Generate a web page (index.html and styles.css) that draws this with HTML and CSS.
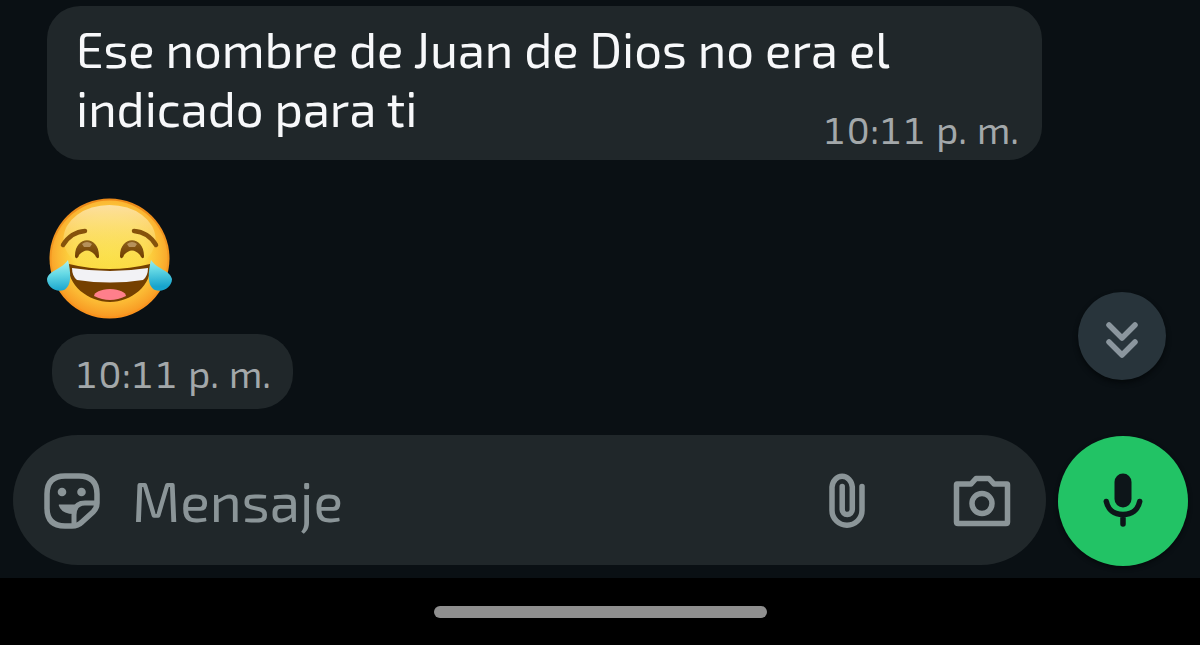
FILE: index.html
```html
<!DOCTYPE html>
<html lang="es">
<head>
<meta charset="utf-8">
<title>Chat</title>
<link rel="stylesheet" href="styles.css">
</head>
<body>
<div class="screen">
  <main class="chat">
    <section class="bubble">
      <p class="message">Ese nombre de Juan de Dios no era el<br>indicado para ti</p>
      <time class="time">10:11 p. m.</time>
    </section>
    <div class="reaction-row">
      <div class="reaction">
        <svg class="emoji" viewBox="0 0 126 122" role="img" aria-label="Cara llorando de risa">
          <defs>
            <linearGradient id="rim" x1="0" y1="0" x2="0" y2="1"><stop offset="0" stop-color="#ed8a18"/><stop offset=".5" stop-color="#f49a22"/><stop offset="1" stop-color="#fb921c"/></linearGradient>
            <radialGradient id="skin" cx=".5" cy=".45" r=".56"><stop offset="0" stop-color="#fbe044"/><stop offset=".55" stop-color="#fcd942"/><stop offset=".8" stop-color="#fbb733"/><stop offset="1" stop-color="#f89722"/></radialGradient>
            <linearGradient id="shine" x1="0" y1="0" x2="0" y2="1"><stop offset="0" stop-color="#fde0a0"/><stop offset="1" stop-color="#fbe258" stop-opacity="0"/></linearGradient>
            <linearGradient id="eye" x1="0" y1="0" x2="0" y2="1"><stop offset="0" stop-color="#8c601b"/><stop offset="1" stop-color="#713d00"/></linearGradient>
            <linearGradient id="tear" x1="0" y1="0" x2=".2" y2="1"><stop offset="0" stop-color="#b3f4ef"/><stop offset=".45" stop-color="#67dae5"/><stop offset="1" stop-color="#17a4cd"/></linearGradient>
          </defs>
          <circle cx="62.500" cy="61.500" r="60" fill="url(#rim)"/>
          <circle cx="62.500" cy="61.500" r="58" fill="url(#skin)"/>
          <ellipse cx="62.500" cy="42" rx="46" ry="34" fill="url(#shine)"/>
          <path d="M16 48Q24 35 38 34M109 48Q101 35 87 34" fill="none" stroke="#86520b" stroke-width="4.500" stroke-linecap="round"/>
          <path d="M28 59C28 38 52 38 52 59C52 63 49 61 48 58Q40 49 32 58C31 62 28 62 28 59ZM73 59C73 38 97 38 97 59C97 63 94 61 93 58Q85 49 77 58C76 62 73 62 73 59Z" fill="url(#eye)"/>
          <path d="M35 47Q40 43 45 47L43 50H37ZM80 47Q85 43 90 47L88 50H82Z" fill="#b6915b"/>
          <path d="M22 67Q62.500 77 103 67C106 88 84 105 63 105S19 88 22 67Z" fill="#754000"/>
          <path d="M25 71Q63 77 101 71Q101 79 96 83Q63 88 30 83Q25 79 25 71Z" fill="#f2f2f5"/>
          <path d="M47 99Q48 93 63 92Q78 93 79 99Q63 107 47 99Z" fill="#ff7f8b"/>
          <path d="M21 63C24 76 25 89 17 93C9 96 0 90 0 82C2 73 14 73 21 63ZM104 63C101 76 100 89 108 93C116 96 125 90 125 82C123 73 111 73 104 63Z" fill="url(#tear)"/>
        </svg>
        <div class="time-pill"><time class="time">10:11 p. m.</time></div>
      </div>
      <button class="scroll-down" aria-label="Ir al final">
        <svg width="34" height="38" viewBox="0 0 34 38" fill="none" stroke="#8b969e" stroke-width="5.500" stroke-linecap="round" stroke-linejoin="round"><path d="M4 4 17 17 30 4M4 21 17 34 30 21"/></svg>
      </button>
    </div>
    <div class="composer">
      <div class="field">
        <svg class="sticker" width="58" height="58" viewBox="0 0 58 58">
          <path d="M22 4H36Q54 4 54 22V31Q54 36 50 40L39 50Q35 54 29 54H22Q4 54 4 36V22Q4 4 22 4Z" fill="none" stroke="#8b9598" stroke-width="5.500"/>
          <path d="M31 53V43Q31 31 42 31H54" fill="none" stroke="#8b9598" stroke-width="5"/>
          <circle cx="19" cy="20" r="4.300" fill="#8b9598"/><circle cx="38.500" cy="20" r="4.300" fill="#8b9598"/>
          <path d="M16 32.500H38Q30 36 31 42Q19 42 16 34Q15.500 32.500 16 32.500Z" fill="#8b9598"/>
        </svg>
        <span class="placeholder">Mensaje</span>
        <svg class="clip" width="36" height="56" viewBox="0 0 36 56" fill="none" stroke="#8b9598" stroke-width="5.500" stroke-linecap="round"><path d="M33 14.500V38.500A15 14.700 0 0 1 3 38.500V15A10.200 12 0 0 1 23.300 15V37.500A5 5 0 0 1 13.200 37.500V14.500"/></svg>
        <svg class="camera" width="58" height="52" viewBox="0 0 58 52" fill="none" stroke="#8b9598" stroke-width="5.500" stroke-linejoin="round"><path d="M4 9H18L23 3.500H36L41 9H54Q54.500 9 54.500 10V47Q54.500 48.500 53 48.500H5Q3.500 48.500 3.500 47V10Q3.500 9 4 9Z"/><circle cx="29" cy="28.500" r="10"/></svg>
      </div>
      <button class="mic" aria-label="Mensaje de voz">
        <svg width="40" height="54" viewBox="0 0 40 54"><rect x="11.500" y="0.500" width="17" height="34" rx="8.500" fill="#0d1519"/><path d="M3.300 28.500C5 36.500 11 41.500 20 41.500S35 36.500 36.700 28.500M20 42V51" fill="none" stroke="#0d1519" stroke-width="5.500" stroke-linecap="round"/></svg>
      </button>
    </div>
  </main>
  <footer class="nav"><div class="handle"></div></footer>
</div>
</body>
</html>
```

FILE: styles.css
```css
* { box-sizing: border-box; }
body { margin: 0; background: #0a1014; font-family: "Exo 2", "Noto Sans", sans-serif; }
button { border: 0; padding: 0; display: grid; place-items: center; border-radius: 50%; }
svg { display: block; flex: none; }
.screen { width: 1200px; height: 645px; display: flex; flex-direction: column; overflow: hidden; }
.chat { height: 578px; padding: 6px 12px 0 13px; display: flex; flex-direction: column; background: #0a1014; }
.bubble { width: 995px; height: 154px; margin-left: 34px; padding: 13px 23px 0 29px; border-radius: 33px; background: #20272a; display: flex; justify-content: space-between; }
.message { margin: 0; width: 740px; font-size: 49px; line-height: 59px; color: #f7f8fa; white-space: nowrap; }
.time { font-size: 38px; line-height: 44px; font-variant-numeric: tabular-nums; word-spacing: 1.5px; color: #a3a8aa; white-space: nowrap; }
.bubble .time { margin-top: 88px; }
.reaction-row { height: 275px; display: flex; justify-content: space-between; padding: 37px 22px 0 34px; }
.emoji { width: 126px; height: 122px; }
.time-pill { width: 241px; height: 75px; margin: 15px 0 0 5px; padding: 17px 0 0 23px; border-radius: 35px; background: #20272a; }
.time-pill .time { display: block; }
.scroll-down { width: 88px; height: 88px; margin-top: 95px; background: #28343b; box-shadow: 0 3px 5px #05090b; }
.scroll-down svg { margin-top: 8px; }
.composer { height: 132px; display: flex; justify-content: space-between; }
.field { width: 1033px; height: 130px; border-radius: 65px; background: #20272a; display: flex; align-items: center; padding: 0 35px 0 30px; }
.sticker { margin-top: 2px; }
.placeholder { margin: 0 auto 0 31px; font-size: 55px; line-height: 72px; color: #8b9598; }
.clip { margin: 0 88px 1px 0; }
.camera { margin-top: 1px; }
.mic { width: 130px; height: 130px; margin-top: 1px; background: #22c365; box-shadow: 0 2px 4px #05090b; }
.mic svg { margin-top: -2px; }
.nav { height: 67px; background: #000; display: flex; justify-content: center; padding-top: 28px; }
.handle { width: 333px; height: 12px; border-radius: 6px; background: #8f8f8f; }
```
